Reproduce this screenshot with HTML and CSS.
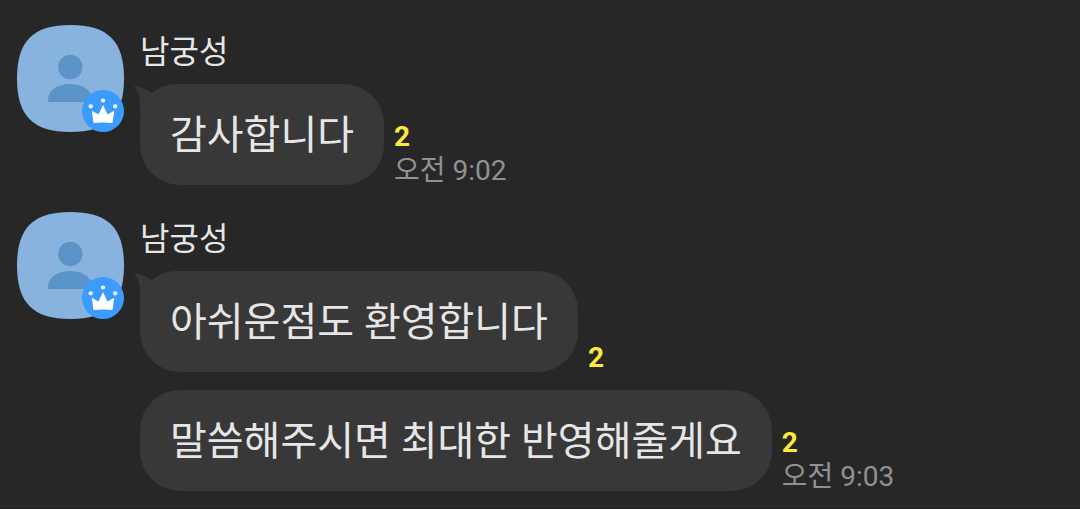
FILE: index.html
```html
<!DOCTYPE html>
<html lang="ko">
<head>
<meta charset="utf-8">
<meta name="viewport" content="width=device-width, initial-scale=1">
<title>채팅</title>
<link rel="stylesheet" href="styles.css">
</head>
<body>
<svg class="defs" aria-hidden="true">
  <symbol id="person" viewBox="0 0 107 107">
    <path class="face" d="M53.500 0C91 0 107 16 107 53.500S91 107 53.500 107 0 91 0 53.500 16 0 53.500 0Z"/>
    <circle class="figure" cx="53.300" cy="42" r="12.200"/>
    <path class="figure" d="M31 77V74C32 64 42 59 53 59S74 64 75 74V77Z"/>
  </symbol>
  <symbol id="crown" viewBox="0 0 42 42">
    <circle class="disc" cx="21" cy="21" r="21"/>
    <g class="crown">
      <circle cx="21" cy="10.500" r="2.100"/>
      <circle cx="8.700" cy="16.300" r="2.100"/>
      <circle cx="33.200" cy="16.300" r="2.100"/>
      <path d="M9.800 20.800L16.500 24.500 21 15 25.500 24.500 32.200 20.800 30.500 33Q21 32 11.500 33Z"/>
    </g>
  </symbol>
  <symbol id="tail" viewBox="0 0 24 30">
    <path class="tail-shape" d="M0 2.500Q9 2 17 9L24 9V30H6V19Q6 9 0 2.500Z"/>
  </symbol>
</svg>
<main class="chat">
  <section class="group">
    <div class="avatar">
      <svg class="photo" role="img" aria-label="프로필"><use href="#person"/></svg>
      <svg class="badge" role="img" aria-label="방장"><use href="#crown"/></svg>
    </div>
    <div class="messages">
      <h2 class="name">남궁성</h2>
      <div class="row">
        <p class="bubble first">감사합니다<svg class="tail" aria-hidden="true"><use href="#tail"/></svg></p>
        <div class="meta"><span class="unread">2</span><time class="time">오전 9:02</time></div>
      </div>
    </div>
  </section>
  <section class="group">
    <div class="avatar">
      <svg class="photo" role="img" aria-label="프로필"><use href="#person"/></svg>
      <svg class="badge" role="img" aria-label="방장"><use href="#crown"/></svg>
    </div>
    <div class="messages">
      <h2 class="name">남궁성</h2>
      <div class="row">
        <p class="bubble first">아쉬운점도 환영합니다<svg class="tail" aria-hidden="true"><use href="#tail"/></svg></p>
        <div class="meta"><span class="unread">2</span></div>
      </div>
      <div class="row">
        <p class="bubble">말씀해주시면 최대한 반영해줄게요</p>
        <div class="meta"><span class="unread">2</span><time class="time">오전 9:03</time></div>
      </div>
    </div>
  </section>
</main>
</body>
</html>
```
FILE: styles.css
```css
* {
  box-sizing: border-box;
}

body {
  margin: 0;
  background: #272727;
  color: #e6e6e6;
  font-family: Roboto, "Noto Sans CJK KR", sans-serif;
}

.defs {
  position: absolute;
  width: 0;
  height: 0;
}

.chat {
  display: flex;
  flex-direction: column;
  gap: 27px;
  padding: 25px 17px 17px;
  border-bottom: 1px solid #241f23;
}

.group {
  display: flex;
  gap: 16px;
}

.avatar {
  position: relative;
  flex: none;
  width: 107px;
  height: 107px;
}

.photo {
  display: block;
  width: 100%;
  height: 100%;
}

.face {
  fill: #89b3df;
}

.figure {
  fill: #5b94c9;
}

.badge {
  position: absolute;
  right: 0;
  bottom: 0;
  width: 42px;
  height: 42px;
}

.disc {
  fill: #3b9bff;
}

.crown {
  fill: #fff;
}

.messages {
  display: flex;
  flex-direction: column;
  min-width: 0;
}

.name {
  margin: 0;
  padding: 4px 0 9px;
  font-size: 32px;
  font-weight: 400;
  line-height: 46px;
}

.row {
  display: flex;
  align-items: flex-end;
  gap: 10px;
}

.row + .row {
  margin-top: 18px;
}

.bubble {
  position: relative;
  margin: 0;
  padding: 21px 30px 19px;
  border-radius: 40px;
  background: #383838;
  font-size: 40px;
  font-weight: 400;
  line-height: 61px;
}

.first {
  border-top-left-radius: 36px;
}

.tail {
  position: absolute;
  top: 0;
  left: -6px;
  width: 24px;
  height: 30px;
}

.tail-shape {
  fill: #383838;
}

.meta {
  display: flex;
  flex: none;
  flex-direction: column;
  gap: 6px;
  font-size: 28px;
  line-height: 28px;
}

.unread {
  color: #ffe93b;
  font-weight: 700;
}

.time {
  color: #919191;
}
```
